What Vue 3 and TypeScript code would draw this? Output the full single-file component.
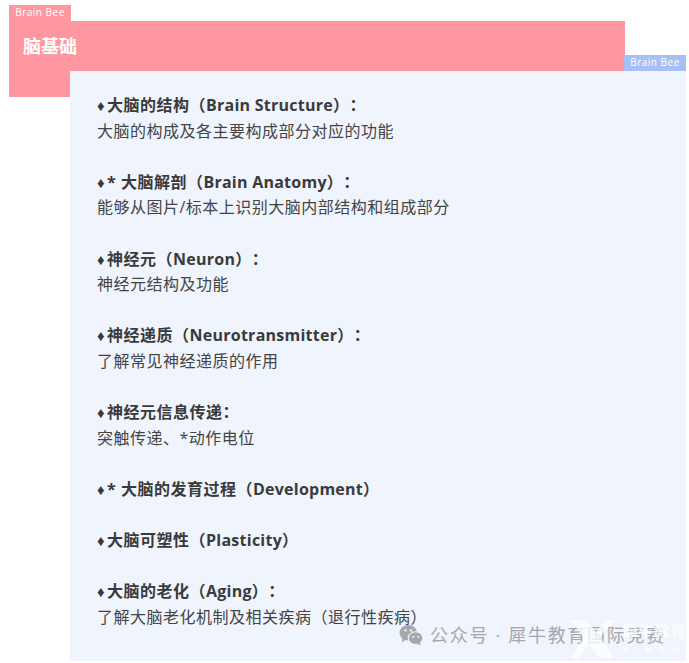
<script setup lang="ts">
interface Topic { pre: string; en?: string; post?: string; desc?: string }
const topics: Topic[] = [
  { pre: '大脑的结构（', en: 'Brain Structure', post: '）：', desc: '大脑的构成及各主要构成部分对应的功能' },
  { pre: '* 大脑解剖（', en: 'Brain Anatomy', post: '）：', desc: '能够从图片/标本上识别大脑内部结构和组成部分' },
  { pre: '神经元（', en: 'Neuron', post: '）：', desc: '神经元结构及功能' },
  { pre: '神经递质（', en: 'Neurotransmitter', post: '）：', desc: '了解常见神经递质的作用' },
  { pre: '神经元信息传递：', desc: '突触传递、*动作电位' },
  { pre: '* 大脑的发育过程（', en: 'Development', post: '）' },
  { pre: '大脑可塑性（', en: 'Plasticity', post: '）' },
  { pre: '大脑的老化（', en: 'Aging', post: '）：', desc: '了解大脑老化机制及相关疾病（退行性疾病）' },
]
</script>

<template>
  <main class="page">
    <span class="tag tag-pink">Brain Bee</span>
    <header class="banner"><h1>脑基础</h1></header>
    <section class="panel">
      <span class="tag tag-blue">Brain Bee</span>
      <div v-for="t in topics" :key="t.pre" class="topic">
        <p class="title"><span class="dia">♦</span>{{ t.pre }}<span v-if="t.en" class="en-word">{{ t.en }}</span>{{ t.post }}</p>
        <p v-if="t.desc" class="desc">{{ t.desc }}</p>
      </div>
      <div class="mark">
        <svg class="wx" viewBox="0 0 26 24" aria-hidden="true">
          <ellipse cx="10" cy="9.5" rx="9.5" ry="8.5" fill="#a4a8ac" />
          <path d="M4 15l-1 5 5-3z" fill="#a4a8ac" />
          <ellipse cx="18" cy="15.5" rx="8" ry="7" fill="#a4a8ac" stroke="#eff4fd" stroke-width="1.2" />
          <path d="M22 20l2 3.500-5-2z" fill="#a4a8ac" />
          <circle cx="7" cy="7" r="1.300" fill="#eff4fd" />
          <circle cx="13" cy="7" r="1.300" fill="#eff4fd" />
          <circle cx="15.500" cy="14" r="1.100" fill="#eff4fd" />
          <circle cx="21" cy="14" r="1.100" fill="#eff4fd" />
        </svg>
        <span class="mark-text">公众号 · 犀牛教育国际竞赛</span>
      </div>
      <div class="logo">
        <svg class="x" viewBox="0 0 44 38" aria-hidden="true">
          <path d="M0 0h16l10 12L36 0h8L30 17l14 21H29L19 24 8 38H0l14-20z" fill="#fff" fill-opacity=".75" />
        </svg>
        <div class="logo-text">
          <span class="cn">犀牛教育</span>
          <span class="en">X-NEW</span>
        </div>
      </div>
    </section>
  </main>
</template>

<style scoped>
.page {
  position: relative;
  width: 689px;
  height: 663px;
  box-sizing: border-box;
  padding: 5px 3px 2px 9px;
  background: #fff;
  overflow: hidden;
  font-family: "Open Sans", "Noto Sans CJK SC", sans-serif;
  color: #3a3a3a;
  text-spacing-trim: space-all;
  font-feature-settings: "chws" 0, "palt" 0;
}
.tag {
  display: block;
  width: 62px;
  height: 16px;
  font-size: 10px;
  line-height: 15px;
  letter-spacing: .5px;
  text-align: center;
  color: #fff;
}
.tag-pink { background: #ff97a0; }
.tag-blue {
  position: absolute;
  top: -16px;
  right: 0;
  background: #a5c0f5;
}
.banner {
  width: 616px;
  height: 76px;
  box-sizing: border-box;
  padding: 12px 14px;
  background: #ff97a0;
}
.banner h1 {
  margin: 0;
  font-size: 18px;
  line-height: 26px;
  font-weight: 700;
  color: #fff;
}
.panel {
  position: relative;
  width: 616px;
  height: 590px;
  box-sizing: border-box;
  margin: -26px 0 0 61px;
  padding: 22px 20px 0 27px;
  background: #eff4fd;
}
.topic { margin-bottom: 25.6px; }
.title, .desc {
  margin: 0;
  height: 25.6px;
  font-size: 16px;
  line-height: 25.6px;
  letter-spacing: .5px;
  white-space: nowrap;
}
.title { font-weight: 700; }
.desc { color: #444; }
.dia {
  display: inline-block;
  width: 10px;
  height: 20px;
  line-height: 20px;
  font-family: "Liberation Sans", sans-serif;
  font-size: 15px;
  letter-spacing: 0;
}
.en-word { letter-spacing: .25px; }
.mark {
  position: absolute;
  left: 328px;
  top: 552px;
  display: flex;
  align-items: center;
  gap: 6px;
}
.wx { width: 26px; height: 22px; }
.mark-text {
  font-size: 18px;
  line-height: 24px;
  letter-spacing: 1.7px;
  color: #a4a8ac;
  white-space: nowrap;
}
.logo {
  position: absolute;
  left: 500px;
  top: 549px;
  display: flex;
  gap: 8px;
  align-items: flex-start;
}
.x { width: 44px; height: 38px; }
.logo-text { display: flex; flex-direction: column; padding-top: 2px; }
.cn {
  font-size: 16px;
  line-height: 19px;
  font-weight: 700;
  color: rgba(255, 255, 255, .8);
  white-space: nowrap;
}
.en {
  width: 62px;
  margin-top: 3px;
  font-size: 9px;
  line-height: 12px;
  letter-spacing: 7px;
  font-weight: 700;
  color: rgba(255, 255, 255, .85);
  white-space: nowrap;
}
</style>
